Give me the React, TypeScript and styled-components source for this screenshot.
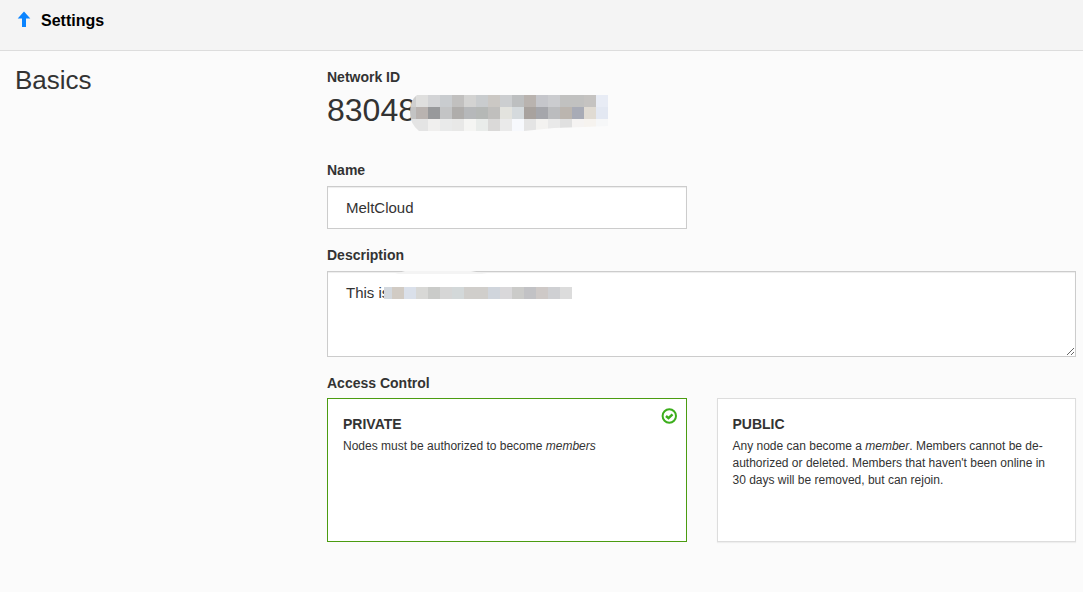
import React, { useState } from "react";
import styled, { createGlobalStyle } from "styled-components";

const GlobalStyle = createGlobalStyle`
  *, *::before, *::after { box-sizing: border-box; }
  html { min-height: 100%; background: #fbfbfb; }
  body {
    margin: 0;
    background: #fbfbfb;
    color: #333;
    font-family: "Liberation Sans", Arial, Helvetica, sans-serif;
    font-size: 14px;
    line-height: 20px;
  }
`;

const Header = styled.header`
  display: flex;
  align-items: flex-start;
  height: 51px;
  padding: 11px 16px;
  background: #f4f4f4;
  border-bottom: 1px solid #ddd;
`;

const HeaderLink = styled.a`
  display: flex;
  align-items: center;
  gap: 9px;
  color: #000;
  font-size: 16px;
  font-weight: bold;
  text-decoration: none;
`;

const Layout = styled.main`
  display: grid;
  grid-template-columns: 312px minmax(0, 1fr);
  padding: 16px 7px 48px 15px;
`;

const SectionTitle = styled.h2`
  margin: 0;
  font-size: 26px;
  line-height: 26px;
  font-weight: normal;
`;

const Form = styled.form`
  display: flex;
  flex-direction: column;
  gap: 16px;
`;

const Field = styled.div`
  display: flex;
  flex-direction: column;
`;

const Label = styled.label`
  margin-bottom: 6px;
  font-weight: bold;
`;

const IdLabel = styled.div`
  font-weight: bold;
`;

const NetworkId = styled.output`
  position: relative;
  display: block;
  height: 57px;
  font-size: 32px;
  line-height: 46px;
`;

const Columns = styled.div`
  display: grid;
  grid-template-columns: 1fr 1fr;
  column-gap: 30px;
`;

const TextInput = styled.input`
  width: 100%;
  height: 43px;
  padding: 0 18px;
  border: 1px solid #ccc;
  border-radius: 0;
  background: #fff;
  box-shadow: inset 0 1px 1px rgba(0, 0, 0, 0.075);
  color: #333;
  font-family: inherit;
  font-size: 15px;
  outline: none;
`;

const TextAreaWrap = styled.div`
  position: relative;
  display: flex;
`;

const TextArea = styled.textarea`
  width: 100%;
  height: 86px;
  padding: 11px 18px;
  border: 1px solid #ccc;
  border-radius: 0;
  background: #fff;
  box-shadow: inset 0 1px 1px rgba(0, 0, 0, 0.075);
  color: #333;
  font-family: inherit;
  font-size: 15px;
  line-height: 20px;
  outline: none;
  resize: vertical;
`;

const Redaction = styled.svg<{ $left: number; $top: number }>`
  position: absolute;
  left: ${(p) => p.$left}px;
  top: ${(p) => p.$top}px;
  pointer-events: none;
`;

const Fieldset = styled.fieldset`
  min-width: 0;
  margin: 0;
  padding: 0;
  border: 0;
`;

const Legend = styled.legend`
  margin-bottom: 5px;
  padding: 0;
  font-weight: bold;
`;

const Card = styled.label<{ $selected: boolean }>`
  position: relative;
  display: block;
  min-height: 144px;
  padding: 15px;
  border: 1px solid ${(p) => (p.$selected ? "#4b9c11" : "#ddd")};
  background: #fff;
  box-shadow: ${(p) => (p.$selected ? "none" : "0 1px 1px rgba(0, 0, 0, 0.05)")};
  cursor: pointer;
`;

const HiddenRadio = styled.input`
  position: absolute;
  width: 1px;
  height: 1px;
  margin: 0;
  opacity: 0;
`;

const CardTitle = styled.strong`
  display: block;
  margin-bottom: 4px;
`;

const CardText = styled.span`
  display: block;
  font-size: 12px;
  line-height: 17px;
`;

const Check = styled.svg`
  position: absolute;
  top: 9px;
  right: 9px;
`;

const CELL = 12;

const idRows = [
  ["#cfcfcf", "#dfdfde", "#d3d4d6", "#c9cccf", "#c1c0bf", "#d3d3d2", "#c9ccce", "#cbc8c4", "#ccced0", "#bdbfc0", "#b9b3af", "#c5c6cb", "#cbcccf", "#c1c1c0", "#c1c1c0", "#c5c3c1", "#e8ecf5"],
  ["#c3c3c3", "#b9b3b0", "#98999b", "#c3c4c5", "#afadab", "#b6b8ba", "#b5b8b6", "#c0bfbd", "#e3e3de", "#d5dadd", "#a8a29e", "#a5a6ab", "#bbbcbe", "#bbb5af", "#a8abb6", "#e0dbd3", "#e3e8f2"],
  ["#e4e4e4", "#e4e4e4", "#f0efee", "#e9eaea", "#e8e8e7", "#f5f5f3", "#e9ecea", "#dad9d8", "#eaeaea", "#f7f9fd", "#e4e4e4", "#f3f2f0", "#e9e9e9", "#e0e0e0", "#f5f3f2", "#f6f3ef", "#f6f7f8"],
];

const descriptionRow = ["#d3d8de", "#d1cbc4", "#dae0ea", "#d8d8d6", "#cacbc9", "#d6d6d6", "#d3d8d9", "#d0cecb", "#d0cecb", "#d0d5dc", "#d9d8da", "#cbcbc9", "#c2c2c5", "#cec9c7", "#cfd0d3", "#dcdcdc"];

function Mosaic({ rows }: { rows: string[][] }) {
  return (
    <>
      {rows.map((row, y) =>
        row.map((fill, x) => (
          <rect key={`${x}-${y}`} x={x * CELL} y={y * CELL} width={CELL} height={CELL} fill={fill} shapeRendering="crispEdges" />
        ))
      )}
    </>
  );
}

export default function App() {
  const [access, setAccess] = useState("private");
  const [name, setName] = useState("MeltCloud");
  const [description, setDescription] = useState("This is");

  const checkmark = (
    <Check width="16" height="16" viewBox="0 0 16 16" fill="none" stroke="#3cae1c" aria-hidden="true">
      <circle cx="8.3" cy="8" r="6.7" strokeWidth="2" />
      <path d="M5 8 7.5 10.2 11.5 6.3" strokeWidth="2.4" />
    </Check>
  );

  return (
    <>
      <GlobalStyle />
      <Header>
        <HeaderLink href="#settings">
          <svg width="16" height="20" viewBox="0 0 16 20" fill="#0a84ff" aria-hidden="true">
            <path d="M8 0.5 14.3 7.6H10V16H6V7.6H1.7Z" />
          </svg>
          Settings
        </HeaderLink>
      </Header>
      <Layout>
        <SectionTitle>Basics</SectionTitle>
        <Form>
          <Field>
            <IdLabel id="network-id-label">Network ID</IdLabel>
            <NetworkId aria-labelledby="network-id-label">
              83048
              <Redaction $left={77} $top={8} width="204" height="36" viewBox="0 0 204 36" aria-hidden="true">
                <clipPath id="id-outline">
                  <path d="M13 0H204V31L180 32L150 33L120 36H15Q6 29 6 17Q6 5 13 0Z" />
                </clipPath>
                <g clipPath="url(#id-outline)">
                  <Mosaic rows={idRows} />
                </g>
              </Redaction>
            </NetworkId>
          </Field>
          <Columns>
            <Field>
              <Label htmlFor="name">Name</Label>
              <TextInput id="name" type="text" value={name} onChange={(e) => setName(e.target.value)} />
            </Field>
          </Columns>
          <Field>
            <Label htmlFor="description">Description</Label>
            <TextAreaWrap>
              <TextArea id="description" spellCheck={false} value={description} onChange={(e) => setDescription(e.target.value)} />
              <Redaction $left={57} $top={16} width="188" height="12" viewBox="4 0 188 12" aria-hidden="true">
                <Mosaic rows={[descriptionRow]} />
              </Redaction>
              <Redaction $left={68} $top={0} width="92" height="4" viewBox="0 0 92 4" aria-hidden="true">
                <path d="M10 0H76L92 3H0Z" fill="#f4f4f4" />
              </Redaction>
            </TextAreaWrap>
          </Field>
          <Fieldset>
            <Legend>Access Control</Legend>
            <Columns>
              <Card $selected={access === "private"}>
                <HiddenRadio type="radio" name="access" checked={access === "private"} onChange={() => setAccess("private")} />
                <CardTitle>PRIVATE</CardTitle>
                <CardText>
                  Nodes must be authorized to become <em>members</em>
                </CardText>
                {access === "private" && checkmark}
              </Card>
              <Card $selected={access === "public"}>
                <HiddenRadio type="radio" name="access" checked={access === "public"} onChange={() => setAccess("public")} />
                <CardTitle>PUBLIC</CardTitle>
                <CardText>
                  Any node can become a <em>member</em>. Members cannot be de-authorized or deleted. Members that haven't been
                  online in 30 days will be removed, but can rejoin.
                </CardText>
                {access === "public" && checkmark}
              </Card>
            </Columns>
          </Fieldset>
        </Form>
      </Layout>
    </>
  );
}
